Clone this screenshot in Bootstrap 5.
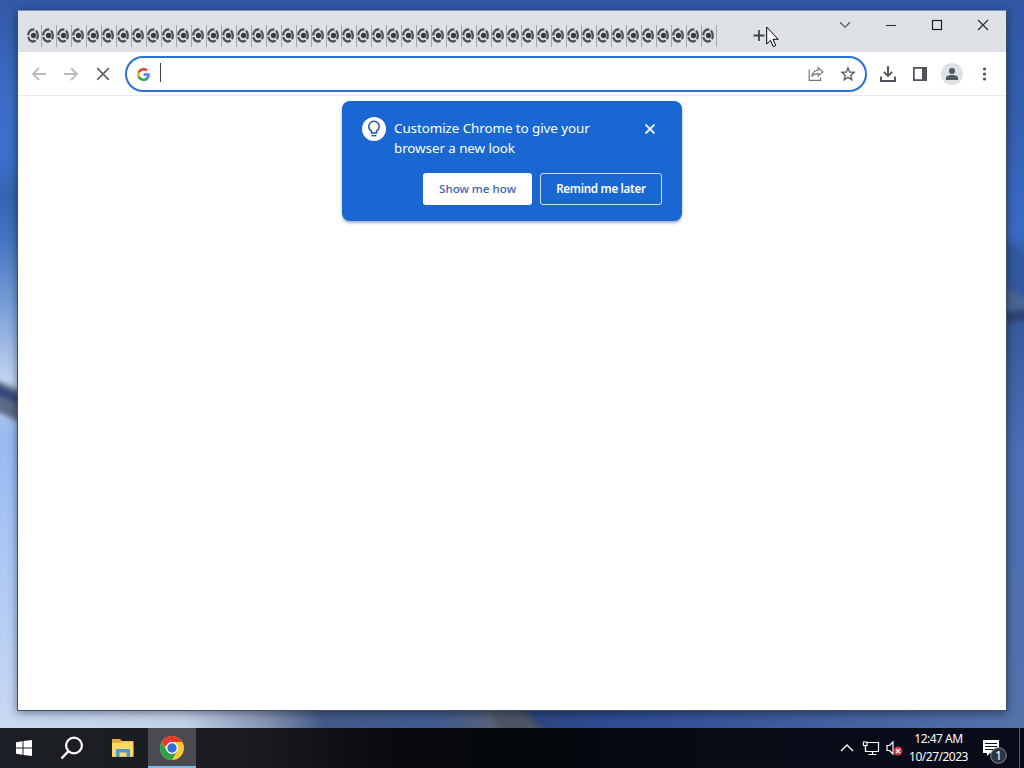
<!DOCTYPE html>
<html lang="en">

<head>
    <meta charset="UTF-8">
    <meta name="viewport" content="width=device-width, initial-scale=1.0">
    <title>New Tab</title>
    <link rel="stylesheet" href="https://cdn.jsdelivr.net/npm/bootstrap@5.3.0/dist/css/bootstrap.min.css">
    <script src="https://cdn.jsdelivr.net/npm/bootstrap@5.3.0/dist/js/bootstrap.bundle.min.js"></script>
    <style>
        body {
            font-family: "Noto Sans", "Open Sans", "Liberation Sans", sans-serif;
            width: 1024px;
            height: 768px;
        }

        svg { display: block; flex: none; }

        .desktop { height: 728px; padding: 10px 17px 17px; background: #3158a5; }
        .wallpaper { z-index: 0; }

        .browser {
            z-index: 1;
            border: 1px solid #3d4f70;
            border-top-color: #8594b5;
            box-shadow: 0 2px 9px rgba(0, 0, 0, .45);
        }

        /* Tab strip */
        .tab-strip { height: 41px; background: #dee1e6; }
        .tab-list { padding: 14px 0 0 9px; width: 702px; }
        .mini-tab { width: 15px; height: 22px; border-right: 1px solid #a3a7ac; padding-top: 3px; }
        .new-tab { padding: 16px 0 0 33px; }
        .caption-btn { width: 46px; height: 28px; }

        /* Toolbar */
        .toolbar { height: 44px; padding: 1px 6px 0 5px; border-bottom: 1px solid #e8eaed; }
        .tool { width: 32px; height: 35px; }
        .omnibox { width: 742px; height: 36px; border: 2px solid #2c72d2; margin: 0 5px 0 6px; padding: 0 1px 0 10px; }
        .caret { width: 1px; height: 19px; background: #3c4043; margin: 0 0 3px 10px; }
        .avatar { width: 22px; height: 22px; background: #dee1e6; }

        /* Promo bubble */
        .promo {
            width: 340px;
            height: 120px;
            margin-top: 5px;
            padding: 16px 20px;
            border-radius: 8px;
            background: #1967d2;
            box-shadow: 0 2px 3px rgba(30, 50, 120, .4);
        }
        .promo-icon { width: 24px; height: 24px; }
        .promo-text { width: 240px; margin-left: 8px; font-size: 13.4px; letter-spacing: -.07px; line-height: 20px; padding-top: 1px; }
        .promo-btn { height: 32px; padding: 0; font-size: 11.6px; border-radius: 3px; font-weight: 600; white-space: nowrap; }
        .promo-btn.show-btn { width: 109px; color: #3d5fb4; font-weight: 500; }
        .promo-btn.later-btn { width: 122px; border-color: #cfe0fa; letter-spacing: -.28px; }

        /* Taskbar */
        .taskbar { height: 40px; background: linear-gradient(90deg, #1b1e24 0, #1b1d21 240px, #07090f 400px, #05080d 560px, #080c18 800px, #080c18 100%); }
        .task-item { width: 48px; height: 40px; }
        .task-item.folder { padding-left: 5px; }
        .task-item.running { background: #494b4f; border-bottom: 2px solid #76b9ed; padding-top: 2px; }
        .clock { width: 74px; font-size: 12px; line-height: 18px; letter-spacing: -.5px; padding: 0 9px 0 0; white-space: nowrap; }
        .peek { width: 5px; height: 40px; border-left: 1px solid #596072; }

        .pointer { left: 766px; top: 26px; z-index: 5; }
    </style>
</head>

<body class="overflow-hidden position-relative">

    <svg width="0" height="0" class="position-absolute">
        <symbol id="favicon" viewBox="0 0 13 15">
            <ellipse cx="6" cy="7.5" rx="4.8" ry="6" fill="none" stroke="#50545a" stroke-width="2.3" stroke-dasharray="9.7 1.65" stroke-dashoffset="6" />
            <ellipse cx="6.5" cy="7.5" rx="2.6" ry="2.8" fill="#383c41" />
        </symbol>
    </svg>

    <!-- Desktop -->
    <main class="desktop position-relative d-flex flex-column">
        <svg class="wallpaper position-absolute top-0 start-0" width="1024" height="728" viewBox="0 0 1024 728">
            <defs>
                <linearGradient id="skyLeft" x1="0" y1="0" x2="0" y2="1">
                    <stop offset="0" stop-color="#3159a5" />
                    <stop offset=".14" stop-color="#3c6ec8" />
                    <stop offset=".22" stop-color="#3b70cb" />
                    <stop offset=".27" stop-color="#3565b0" />
                    <stop offset=".33" stop-color="#4475c0" />
                    <stop offset=".43" stop-color="#7fa4dc" />
                    <stop offset=".52" stop-color="#c0d3f0" />
                    <stop offset=".6" stop-color="#98b9f2" />
                    <stop offset=".8" stop-color="#b0cbf7" />
                    <stop offset="1" stop-color="#c9d9f3" />
                </linearGradient>
                <linearGradient id="skyRight" x1="0" y1="0" x2="0" y2="1">
                    <stop offset="0" stop-color="#3058a6" />
                    <stop offset=".15" stop-color="#3160b0" />
                    <stop offset=".32" stop-color="#3a6bc4" />
                    <stop offset=".37" stop-color="#30549b" />
                    <stop offset=".46" stop-color="#395c9d" />
                    <stop offset=".62" stop-color="#4a6fb6" />
                    <stop offset="1" stop-color="#5272aa" />
                </linearGradient>
                <linearGradient id="ground" x1="0" y1="0" x2="1" y2="0">
                    <stop offset="0" stop-color="#c9d9f3" />
                    <stop offset=".17" stop-color="#c2d1ea" />
                    <stop offset=".25" stop-color="#8795b4" />
                    <stop offset=".31" stop-color="#435a89" />
                    <stop offset=".42" stop-color="#405a91" />
                    <stop offset=".49" stop-color="#5a6375" />
                    <stop offset=".515" stop-color="#2d4680" />
                    <stop offset=".6" stop-color="#2d4c93" />
                    <stop offset="1" stop-color="#5272aa" />
                </linearGradient>
                <filter id="soft"><feGaussianBlur stdDeviation="2.5" /></filter>
            </defs>
            <rect width="1024" height="728" fill="#3159a5" />
            <rect x="17" y="704" width="990" height="24" fill="url(#ground)" />
            <rect width="18" height="728" fill="url(#skyLeft)" />
            <rect x="1006" width="18" height="728" fill="url(#skyRight)" />
            <g filter="url(#soft)">
                <path d="M-6 380L24 392V424L-6 410Z" fill="#5d6b85" />
                <path d="M-6 382L24 398V406L-6 394Z" fill="#2f4a7c" />
                <path d="M1000 240L1030 256V300L1000 288Z" fill="#33599f" />
                <path d="M1000 284L1030 302V318L1000 318Z" fill="#4a6696" />
                <path d="M1000 312L1030 308V320L1000 324Z" fill="#2d4478" />
                <path d="M488 704H518L545 734H500Z" fill="#4d5668" />
            </g>
        </svg>

        <!-- Browser window -->
        <section class="browser position-relative flex-grow-1 d-flex flex-column bg-white">
            <div class="tab-strip d-flex">
                <div class="tab-list d-flex" id="tabList"></div>
                <div class="new-tab">
                    <svg width="17" height="17" viewBox="0 0 17 17"><path d="M6 3V14M.5 8.5H11.5" stroke="#42464b" stroke-width="1.8" /></svg>
                </div>
                <div class="d-flex ms-auto">
                    <div class="caption-btn d-flex align-items-center justify-content-center">
                        <svg width="12" height="12" viewBox="0 0 12 12"><path d="M1 3.2L6 8.2L11 3.2" fill="none" stroke="#5a5d62" stroke-width="1.3" /></svg>
                    </div>
                    <div class="caption-btn d-flex align-items-center justify-content-center">
                        <svg width="12" height="12" viewBox="0 0 12 12"><path d="M1 6.5H11" stroke="#333" stroke-width="1.1" /></svg>
                    </div>
                    <div class="caption-btn d-flex align-items-center justify-content-center">
                        <svg width="12" height="12" viewBox="0 0 12 12"><rect x="1.5" y="1.5" width="9" height="9" fill="none" stroke="#222" stroke-width="1.2" /></svg>
                    </div>
                    <div class="caption-btn d-flex align-items-center justify-content-center">
                        <svg width="12" height="12" viewBox="0 0 12 12"><path d="M1 1L11 11M11 1L1 11" stroke="#2c2c2c" stroke-width="1.2" /></svg>
                    </div>
                </div>
            </div>

            <div class="toolbar d-flex align-items-center">
                <div class="tool d-flex align-items-center justify-content-center">
                    <svg width="16" height="16" viewBox="0 0 16 16"><path d="M15 8H2M8 2L2 8L8 14" fill="none" stroke="#b9bbbe" stroke-width="1.8" /></svg>
                </div>
                <div class="tool d-flex align-items-center justify-content-center">
                    <svg width="16" height="16" viewBox="0 0 16 16"><path d="M1 8H14M8 2L14 8L8 14" fill="none" stroke="#b9bbbe" stroke-width="1.8" /></svg>
                </div>
                <div class="tool d-flex align-items-center justify-content-center">
                    <svg width="16" height="16" viewBox="0 0 16 16"><path d="M2.2 2.2L13.8 13.8M13.8 2.2L2.2 13.8" stroke="#63666b" stroke-width="1.8" /></svg>
                </div>

                <div class="omnibox rounded-pill d-flex align-items-center">
                    <svg width="13" height="13" viewBox="0 0 48 48">
                        <path fill="#4285f4" d="M47 24.5c0-1.6-.2-3.2-.5-4.7H24v9h13c-.6 3-2.3 5.500-4.8 7.2v6h7.8C44.4 37.9 47 31.8 47 24.5z" />
                        <path fill="#34a853" d="M24 48c6.5 0 12-2.1 16-5.9l-7.8-6c-2.2 1.5-5 2.3-8.2 2.3-6.3 0-11.6-4.2-13.5-9.9H2.5v6.2C6.5 42.6 14.6 48 24 48z" />
                        <path fill="#fbbc05" d="M10.5 28.5c-.5-1.4-.8-2.9-.8-4.5s.3-3.1.8-4.5v-6.2h-8C.9 16.5 0 20.1 0 24s.9 7.5 2.5 10.7l8-6.2z" />
                        <path fill="#ea4335" d="M24 9.5c3.5 0 6.7 1.2 9.2 3.6l6.9-6.9C35.9 2.4 30.5 0 24 0 14.6 0 6.5 5.4 2.5 13.3l8 6.2C12.4 13.7 17.7 9.5 24 9.5z" />
                    </svg>
                    <div class="caret"></div>
                    <div class="tool d-flex align-items-center justify-content-center ms-auto">
                        <svg width="16" height="16" viewBox="0 0 16 16"><path d="M1.2 3.5V14.3H12.5V11.5M10.2 1.7L14.8 5.9L10.2 10V7.7C7.3 7.7 5.2 8.5 3.9 10.7C4.3 7 6.4 4.4 10.2 4.1Z" fill="none" stroke="#74777c" stroke-width="1.2" /></svg>
                    </div>
                    <div class="tool d-flex align-items-center justify-content-center">
                        <svg width="16" height="16" viewBox="0 0 16 16"><path d="M8 1.9L9.7 6L14.2 6.4L10.8 9.3L11.8 13.7L8 11.3L4.2 13.7L5.2 9.3L1.8 6.4L6.3 6Z" fill="none" stroke="#5f6368" stroke-width="1.4" /></svg>
                    </div>
                </div>

                <div class="tool d-flex align-items-center justify-content-center">
                    <svg width="16" height="16" viewBox="0 0 16 16"><path d="M8 0V9.5M3.8 5.8L8 10L12.2 5.8M1 10.5V15H15V10.5" fill="none" stroke="#4f5358" stroke-width="1.9" /></svg>
                </div>
                <div class="tool d-flex align-items-center justify-content-center">
                    <svg width="16" height="16" viewBox="0 0 16 16"><path d="M1.9 1.9H14.1V14.1H1.9Z" fill="none" stroke="#4f5358" stroke-width="1.7" /><rect x="10" y="2" width="4.5" height="12" fill="#4f5358" /></svg>
                </div>
                <div class="tool d-flex align-items-center justify-content-center">
                    <div class="avatar rounded-circle d-flex align-items-center justify-content-center">
                        <svg width="14" height="14" viewBox="0 0 14 14"><circle cx="7" cy="4" r="3" fill="#4f5b69" /><path d="M1 13V11C1 8.8 4.5 8 7 8S13 8.8 13 11V13Z" fill="#4f5b69" /></svg>
                    </div>
                </div>
                <div class="tool d-flex align-items-center justify-content-center">
                    <svg width="16" height="16" viewBox="0 0 16 16" fill="#4f5358"><circle cx="8.5" cy="3" r="1.6" /><circle cx="8.5" cy="8" r="1.6" /><circle cx="8.5" cy="13" r="1.6" /></svg>
                </div>
            </div>

            <!-- Promo bubble -->
            <div class="promo mx-auto text-white d-flex flex-column justify-content-between">
                <div class="d-flex align-items-start">
                    <div class="promo-icon rounded-circle bg-white d-flex align-items-center justify-content-center">
                        <svg width="16" height="18" viewBox="0 0 16 18"><path d="M5.5 13V11C3.8 10 2.8 8.4 2.8 6.5A5.2 5.2 0 0 1 13.2 6.5C13.2 8.4 12.2 10 10.5 11V13Z" fill="none" stroke="#24569f" stroke-width="1.5" /><path d="M5.5 15.7H10.5" stroke="#24569f" stroke-width="1.4" /></svg>
                    </div>
                    <div class="promo-text">Customize Chrome to give your<br>browser a new look</div>
                    <svg class="ms-auto mt-1" width="24" height="16" viewBox="0 0 24 16"><path d="M7.5 3.5L16.5 12.5M16.5 3.5L7.5 12.5" stroke="#e8f0fe" stroke-width="1.8" /></svg>
                </div>
                <div class="d-flex justify-content-end gap-2">
                    <button class="btn btn-light bg-white border-0 promo-btn show-btn">Show me how</button>
                    <button class="btn btn-outline-light text-white promo-btn later-btn">Remind me later</button>
                </div>
            </div>
        </section>
    </main>

    <!-- Taskbar -->
    <footer class="taskbar d-flex text-white">
        <div class="task-item d-flex align-items-center justify-content-center">
            <svg width="16" height="16" viewBox="0 0 16 16" fill="#fff"><path d="M0 2.2L6.5 1.3V7.5H0ZM7.5 1.1L16 0V7.5H7.5ZM0 8.5H6.5V14.7L0 13.8ZM7.5 8.5H16V16L7.5 14.9Z" /></svg>
        </div>
        <div class="task-item d-flex align-items-center justify-content-center">
            <svg width="24" height="24" viewBox="0 0 24 24"><circle cx="14" cy="9.5" r="7.9" fill="none" stroke="#fff" stroke-width="2.2" /><path d="M8.5 15.2L1.5 22.5" stroke="#fff" stroke-width="2.4" /></svg>
        </div>
        <div class="task-item folder d-flex align-items-center justify-content-center me-1">
            <svg width="22" height="20" viewBox="0 0 22 20">
                <path d="M0 1H8L10 3H21V19H0Z" fill="#e5a93c" />
                <path d="M0 5H8.5L10.5 3.5H21.5V18.5H0Z" fill="#fbd969" />
                <path d="M4 19V12.5C4 11.5 4.5 11 5.5 11H16.5C17.5 11 18 11.5 18 12.5V19H14.5V14.5H7.5V19Z" fill="#4b9ac9" />
            </svg>
        </div>
        <div class="task-item running d-flex align-items-center justify-content-center">
            <svg width="24" height="24" viewBox="0 0 24 24">
                <circle cx="12" cy="12" r="12" fill="#fcc934" />
                <path d="M1.6 6A12 12 0 0 0 12 24L17.2 15L6.8 15Z" fill="#2da04c" />
                <path d="M1.6 6A12 12 0 0 1 22.4 6H12A6 6 0 0 0 6.8 9L5 11Z" fill="#e33b2e" />
                <circle cx="12" cy="12" r="5.9" fill="#fff" />
                <circle cx="12" cy="12" r="4.7" fill="#2f70df" />
            </svg>
        </div>

        <div class="d-flex align-items-center ms-auto">
            <svg width="24" height="24" viewBox="0 0 24 24"><path d="M6 15L12 9L18 15" fill="none" stroke="#fff" stroke-width="1.4" /></svg>
            <svg width="24" height="24" viewBox="0 0 24 24" fill="none" stroke="#fff" stroke-width="1.2"><path d="M8.5 6.5H19.5V15.5H6.5V10.5M13.5 15.5V18.5M9.5 18.5H17.5" /><path d="M4.5 6V9.5H8V6ZM6.5 9.5V15" /></svg>
            <svg width="23" height="24" viewBox="0 0 23 24">
                <path d="M4 9.5H6.5L10 6V18L6.5 14.5H4Z" fill="none" stroke="#fff" stroke-width="1.2" />
                <circle cx="15" cy="15" r="4.5" fill="#d13438" />
                <path d="M13 13L17 17M17 13L13 17" stroke="#fff" stroke-width="1.2" />
            </svg>
            <div class="clock text-center">12:47 AM<br>10/27/2023</div>
            <svg width="39" height="40" viewBox="0 0 39 40">
                <path d="M3 12H19V25H10L7 28V25H3Z" fill="#fff" />
                <path d="M5 15.5H17M5 18.5H17M5 21.5H13" stroke="#0a0e18" stroke-width="1.2" />
                <circle cx="18.5" cy="27.5" r="7.8" fill="#303640" stroke="#8a8e96" stroke-width="1" />
                <text x="18.5" y="32" font-size="12.5" text-anchor="middle" fill="#fff">1</text>
            </svg>
        </div>
        <div class="peek"></div>
    </footer>

    <svg class="pointer position-absolute" width="14" height="23" viewBox="0 0 14 23"><path d="M.7 1V18L4.5 14.3L7.2 20.5L9.7 19.4L7 13.3H12.2Z" fill="#fff" stroke="#000" stroke-width="1" /></svg>

    <script>
        // Fill the strip with collapsed tabs
        const tabList = document.getElementById("tabList");
        for (let i = 0; i < 46; i++) {
            tabList.innerHTML += `<div class="mini-tab"><svg width="13" height="15"><use href="#favicon"></use></svg></div>`;
        }
    </script>

</body>

</html>
